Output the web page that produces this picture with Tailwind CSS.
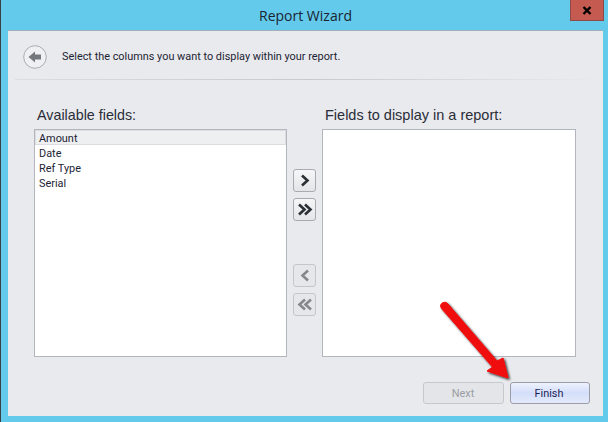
<!DOCTYPE html>
<html><head><meta charset="utf-8"><script src="https://cdn.jsdelivr.net/npm/@tailwindcss/browser@4"></script></head>
<body class="m-0">
<div class="relative w-[608px] h-[422px] overflow-hidden bg-[#63caec] border-l border-l-[#3a3f44] flex flex-col font-['Roboto',sans-serif]">
  <header class="relative h-[30px] shrink-0 flex items-center justify-center pl-[2px] text-[14px] text-[#1a2430] font-['Open_Sans',sans-serif]">
    <span>Report Wizard</span>
    <div class="absolute right-[4px] top-0 w-[34px] h-[21px] bg-[#c45a50] border border-[#8c4a48] border-t-0 flex items-center justify-center">
      <svg width="10" height="9" viewBox="0 0 10 9"><path d="M1.5 1L8.5 8M8.5 1L1.5 8" stroke="#000" stroke-width="2.4"/></svg>
    </div>
  </header>
  <main class="ml-[7px] mr-[5px] h-[386px] bg-[#e9eaee] border-t border-t-[#9fb0bb] flex flex-col">
    <div class="h-[48px] shrink-0 pl-[15px] pt-[4px] flex items-center gap-[15px]">
      <svg width="24" height="24" viewBox="0 0 24 24" class="shrink-0"><circle cx="12" cy="12" r="11.3" fill="#eef0f3" stroke="#a9acb2" stroke-width="1"/><path d="M5.5 12L12 6.5V9.5H18V14.5H12V17.5Z" fill="#74777d"/></svg>
      <span class="text-[10.9px] leading-none text-[#1c2433]">Select the columns you want to display within your report.</span>
    </div>
    <div class="h-[1px] shrink-0 ml-[7px] bg-gradient-to-r from-[#dcdde0] via-[#c8c9cc] to-[#e9eaee]"></div>
    <div class="flex pl-[26px] pt-[25px] shrink-0">
      <section class="w-[253px]">
        <h2 class="h-[24px] pl-[3px] text-[14.3px] leading-[20px] font-normal text-[#2a2d38] font-['Liberation_Sans',sans-serif]">Available fields:</h2>
        <ul class="h-[228px] bg-white border border-[#b4b6bd] text-[10.9px] leading-[15px] text-[#1c2433]">
          <li class="h-[15px] pl-[3px] bg-[#eeeff1] border border-[#dcdde0] leading-[15px]">Amount</li>
          <li class="pl-[4px] translate-y-[1px]">Date</li>
          <li class="pl-[4px] translate-y-[1px]">Ref Type</li>
          <li class="pl-[4px] translate-y-[1px]">Serial</li>
        </ul>
      </section>
      <div class="w-[35px] pl-[6px] pt-[64px] flex flex-col">
        <button class="w-[23px] h-[23px] rounded-[3px] border border-[#a8aab0] bg-gradient-to-b from-[#f6f6f8] to-[#e4e5e9] flex items-center justify-center">
          <svg width="12" height="13" viewBox="0 0 12 13"><path d="M3 1.5L8.5 6.5L3 11.5" fill="none" stroke="#2b2f36" stroke-width="2.6"/></svg>
        </button>
        <button class="mt-[6px] w-[23px] h-[23px] rounded-[3px] border border-[#a8aab0] bg-gradient-to-b from-[#f6f6f8] to-[#e4e5e9] flex items-center justify-center">
          <svg width="16" height="13" viewBox="0 0 16 13"><path d="M2 1.5L7.5 6.5L2 11.5M8 1.5L13.5 6.5L8 11.5" fill="none" stroke="#2b2f36" stroke-width="2.6"/></svg>
        </button>
        <button class="mt-[43px] w-[23px] h-[23px] rounded-[3px] border border-[#c4c6cb] bg-[#e6e7ea] flex items-center justify-center">
          <svg width="12" height="13" viewBox="0 0 12 13"><path d="M9 1.5L3.5 6.5L9 11.5" fill="none" stroke="#85878c" stroke-width="2.6"/></svg>
        </button>
        <button class="mt-[6px] w-[23px] h-[23px] rounded-[3px] border border-[#c4c6cb] bg-[#e6e7ea] flex items-center justify-center">
          <svg width="16" height="13" viewBox="0 0 16 13"><path d="M8 1.5L2.5 6.5L8 11.5M14 1.5L8.5 6.5L14 11.5" fill="none" stroke="#85878c" stroke-width="2.6"/></svg>
        </button>
      </div>
      <section class="w-[254px]">
        <h2 class="h-[24px] pl-[3px] text-[14.5px] leading-[20px] font-normal text-[#2a2d38] font-['Liberation_Sans',sans-serif]">Fields to display in a report:</h2>
        <div class="h-[228px] bg-white border border-[#b4b6bd]"></div>
      </section>
    </div>
    <div class="flex justify-end gap-[6px] pr-[13px] pt-[25px] text-[10.9px]">
      <button class="w-[81px] h-[22px] pt-[2px] pr-[1px] rounded-[3px] border border-[#c6c8cc] bg-[#e4e5e8] text-[#9a9ca3]">Next</button>
      <button class="w-[80px] h-[22px] pt-[2px] pr-[2px] rounded-[3px] border border-[#9a9ca8] bg-gradient-to-b from-[#eef2fd] via-[#d3defa] to-[#e4eafb] text-[#1c1f55]">Finish</button>
    </div>
  </main>
  <svg class="absolute left-[-1px] top-0 pointer-events-none" width="608" height="422" viewBox="0 0 608 422">
    <defs><filter id="s" x="-20%" y="-20%" width="140%" height="140%"><feDropShadow dx="1.5" dy="1.5" stdDeviation="1.2" flood-color="#000" flood-opacity="0.8"/></filter></defs>
    <path filter="url(#s)" d="M440.5 306.5C440.5 302 446 301 448 304L497 361L503 358L508 378L487 371L492.5 367L442 309Z" fill="#f00a0a" stroke="#f00a0a" stroke-width="1" stroke-linejoin="round"/>
  </svg>
</div>
</body></html>
